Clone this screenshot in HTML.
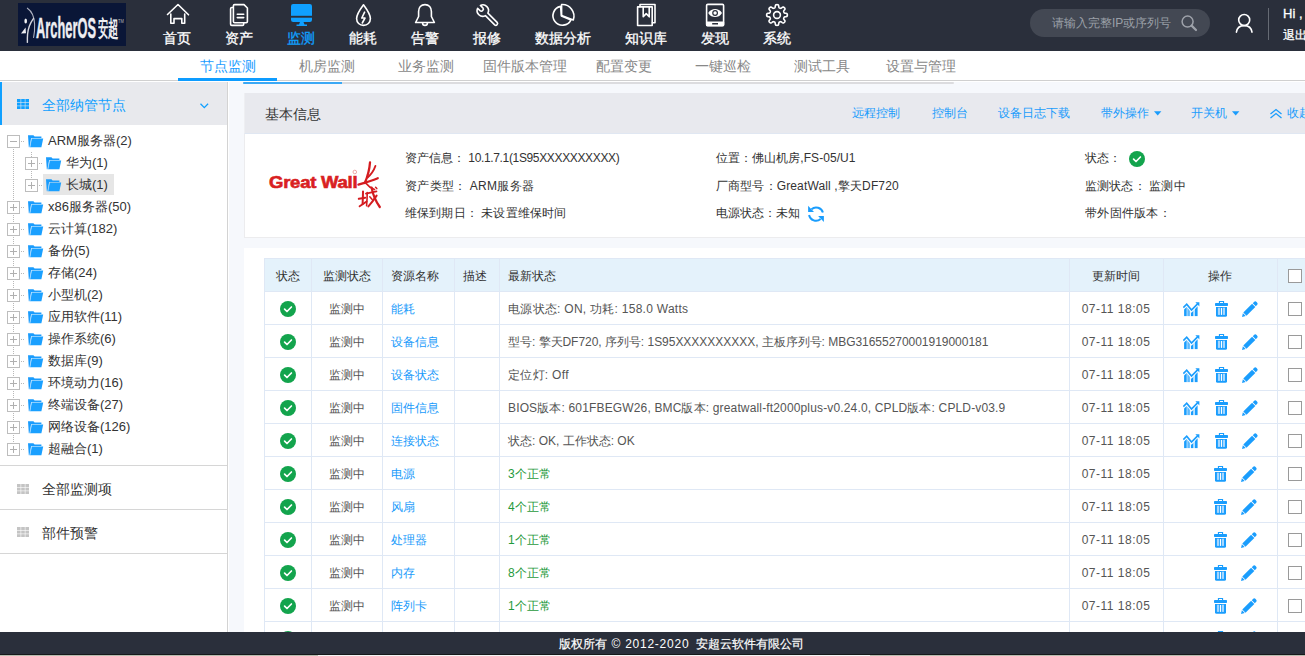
<!DOCTYPE html><html><head><meta charset="utf-8"><style>
*{margin:0;padding:0;box-sizing:border-box}
html,body{width:1305px;height:656px;overflow:hidden;background:#fff}
body{position:relative;font-family:"Liberation Sans",sans-serif;color:#333;font-size:12px}
.a{position:absolute;white-space:nowrap}
#hdr{left:0;top:0;width:1305px;height:51px;background:#2a2f3b}
#logo{left:18px;top:3px;width:108px;height:43px;background:#0a1637;overflow:hidden}
.nt{font-size:14px;line-height:16px;color:#fff;text-align:center;-webkit-text-stroke:0.3px currentColor}
.nt.on{color:#10a0ff}
#srch{left:1030px;top:9px;width:180px;height:28px;border-radius:14px;background:#434853}
.tab{top:56.5px;width:99px;text-align:center;font-size:14px;line-height:18px;color:#888}
.tab.on{color:#1a9cff}
.tr{font-size:13px;line-height:16px;color:#333}
.bx{width:13px;height:13px;border:1px solid #bdbdbd;background:#fff}
.td{font-size:12px;line-height:16px;color:#555}
.lk{color:#1a9bfb}
.gr{color:#1f9a3c}
.chk{width:14px;height:14px;border:1px solid #9a9a9a;background:#fff}
</style></head><body>
<div id="hdr" class="a"></div>
<div id="logo" class="a">
<svg class="a" style="left:0;top:0" width="108" height="43" viewBox="0 0 108 43">
<path d="M9.4 5.2 C13.5 8 16.2 13 16.6 21 C16.9 27 16.3 31 15.6 34.5" stroke="#aeb2c0" stroke-width="1.1" fill="none" stroke-linecap="round"/>
<path d="M15.4 15.6 C12.5 19.5 10.2 25 9.6 31 C9.3 34.5 9.3 37 9.4 39.4" stroke="#d6d7de" stroke-width="1.4" fill="none" stroke-linecap="round"/>
<ellipse cx="7.7" cy="18" rx="1.3" ry="2.5" fill="#f2f2f5"/>
<path d="M3 30.6 L7.6 24.6 L8 30.2 Z" fill="#eeeef2"/>
</svg>
<div class="a" style="left:18.2px;top:11.3px;font-size:29px;line-height:29px;font-weight:bold;color:#eeeef2;transform:scaleX(0.443);transform-origin:0 0;-webkit-text-stroke:0.4px #eeeef2">ArcherOS</div>
<div class="a" style="left:79.5px;top:14px;font-size:21.5px;line-height:24px;font-weight:bold;color:#eeeef2;transform:scaleX(0.47);transform-origin:0 0">安超</div>
<div class="a" style="left:100px;top:15.5px;font-size:5px;line-height:5px;color:#bbb;transform:scaleX(0.8);transform-origin:0 0">TM</div>
</div>
<div class="a nt" style="left:132px;top:29.5px;width:90px">首页</div>
<div class="a nt" style="left:194px;top:29.5px;width:90px">资产</div>
<div class="a nt on" style="left:256px;top:29.5px;width:90px">监测</div>
<div class="a nt" style="left:318px;top:29.5px;width:90px">能耗</div>
<div class="a nt" style="left:380px;top:29.5px;width:90px">告警</div>
<div class="a nt" style="left:442px;top:29.5px;width:90px">报修</div>
<div class="a nt" style="left:518px;top:29.5px;width:90px">数据分析</div>
<div class="a nt" style="left:601px;top:29.5px;width:90px">知识库</div>
<div class="a nt" style="left:670px;top:29.5px;width:90px">发现</div>
<div class="a nt" style="left:732px;top:29.5px;width:90px">系统</div>

<svg class="a" style="left:0;top:0" width="800" height="30" viewBox="0 0 800 30">
<!-- home -->
<path d="M167.5 14.5 L178 4.5 L188.5 14.8 M170.8 14 V23.3 H174 V18.6 H181.8 V23.3 H184.7 V14" stroke="#fff" stroke-width="1.6" fill="none" stroke-linejoin="round" stroke-linecap="round"/>
<!-- assets -->
<path d="M233 7.5 H231.8 Q230.6 7.5 230.6 8.7 V24.2 Q230.6 25.4 231.8 25.4 H242.5 Q243.7 25.4 243.7 24.2 V23" stroke="#fff" stroke-width="1.6" fill="none" stroke-linejoin="round" stroke-linecap="round"/>
<path d="M234.6 4.6 H244 L247.4 8 V21.6 Q247.4 22.8 246.2 22.8 H234.6 Q233.4 22.8 233.4 21.6 V5.8 Q233.4 4.6 234.6 4.6 Z" stroke="#fff" stroke-width="1.6" fill="none" stroke-linejoin="round" stroke-linecap="round"/>
<path d="M237.3 14.2 H243.7 M237.3 17.6 H243.7" stroke="#fff" stroke-width="1.6" fill="none" stroke-linejoin="round" stroke-linecap="round"/>
<!-- monitor -->
<rect x="291" y="4" width="21" height="18" rx="2.2" fill="#10a0ff"/>
<rect x="291" y="15.8" width="21" height="1.9" fill="#2a2f3b"/>
<path d="M300 22 H303.5 L304.5 24.6 H307 V26 H296.5 V24.6 H299 Z" fill="#10a0ff"/>
<!-- drop -->
<path d="M363.5 4.8 C360 9.5 356.6 14 356.6 18.6 C356.6 22.6 359.6 25.4 363.5 25.4 C367.4 25.4 370.4 22.6 370.4 18.6 C370.4 14 367 9.5 363.5 4.8 Z" stroke="#fff" stroke-width="1.6" fill="none" stroke-linejoin="round" stroke-linecap="round"/>
<path d="M364.6 12.2 L361.8 18 H365 L362.3 23" stroke="#fff" stroke-width="1.6" fill="none" stroke-linejoin="round" stroke-linecap="round"/>
<!-- bell -->
<path d="M425 4.6 C421 4.6 418.6 7.5 418.6 11.5 V16.5 L415.6 22.5 H434.4 L431.4 16.5 V11.5 C431.4 7.5 429 4.6 425 4.6 Z" stroke="#fff" stroke-width="1.6" fill="none" stroke-linejoin="round" stroke-linecap="round"/>
<path d="M422.6 23 A2.4 2.4 0 0 0 427.4 23" stroke="#fff" stroke-width="1.6" fill="none" stroke-linejoin="round" stroke-linecap="round"/>
<!-- wrench -->
<path d="M485.42 15.66 L494.67 24.84 A1.75 1.75 0 0 0 497.13 22.36 L487.88 13.18 A5.7 5.7 0 0 0 480.42 5.42 L482.83 7.82 A2.0 2.0 0 0 1 480.02 10.65 L477.60 8.26 A5.7 5.7 0 0 0 485.42 15.66 Z" stroke="#fff" stroke-width="1.6" fill="none" stroke-linejoin="round" stroke-linecap="round"/>
<!-- pie -->
<path d="M560.6 6.4 A9.5 9.5 0 1 0 571.0 19.9 L561.4 15.9 Z" stroke="#fff" stroke-width="1.6" fill="none" stroke-linejoin="round" stroke-linecap="round"/>
<path d="M561.6 4.6 V15.4 L573.3 20 A11.6 11.6 0 0 0 561.6 4.6 Z" stroke="#fff" stroke-width="1.6" fill="none" stroke-linejoin="round" stroke-linecap="round"/>
<!-- book -->
<path d="M640 6.6 V4.5 H655 V22.8 H652.4" stroke="#fff" stroke-width="1.6" fill="none" stroke-linejoin="round" stroke-linecap="round"/>
<rect x="637.6" y="6.9" width="14.6" height="18.6" stroke="#fff" stroke-width="1.6" fill="none" stroke-linejoin="round" stroke-linecap="round"/>
<path d="M643.2 7.2 V16.8 L646.2 13.6 L649.2 16.8 V7.2" stroke="#fff" stroke-width="1.6" fill="none" stroke-linejoin="round" stroke-linecap="round"/>
<!-- tablet -->
<rect x="706.6" y="4.4" width="17" height="21.2" rx="1.2" stroke="#fff" stroke-width="1.6" fill="none" stroke-linejoin="round" stroke-linecap="round"/>
<rect x="706" y="21.4" width="18.2" height="4.8" rx="1" fill="#fff"/>
<rect x="712.2" y="23" width="5.8" height="1.5" fill="#2a2f3b"/>
<path d="M708.2 13 C710 10 712.5 9 715.1 9 C717.7 9 720.2 10 722 13 C720.2 16 717.7 17 715.1 17 C712.5 17 710 16 708.2 13 Z" fill="#fff"/>
<circle cx="715.1" cy="13" r="2.9" fill="#2a2f3b"/>
<circle cx="715.1" cy="13" r="1.7" fill="#fff"/>
<!-- gear -->
<path d="M787.35 15.00 L787.34 15.27 L787.32 15.54 L787.27 15.81 L787.18 16.07 L787.00 16.32 L786.66 16.53 L786.08 16.68 L785.38 16.78 L784.80 16.87 L784.45 17.00 L784.25 17.15 L784.13 17.32 L784.04 17.49 L783.96 17.67 L783.88 17.85 L783.81 18.03 L783.74 18.21 L783.68 18.40 L783.65 18.61 L783.68 18.86 L783.84 19.19 L784.18 19.66 L784.61 20.23 L784.91 20.75 L785.00 21.14 L784.96 21.44 L784.84 21.69 L784.68 21.91 L784.51 22.12 L784.32 22.32 L784.12 22.51 L783.91 22.68 L783.69 22.84 L783.44 22.96 L783.14 23.00 L782.75 22.91 L782.23 22.61 L781.66 22.18 L781.19 21.84 L780.86 21.68 L780.61 21.65 L780.40 21.68 L780.21 21.74 L780.03 21.81 L779.85 21.88 L779.67 21.96 L779.49 22.04 L779.32 22.13 L779.15 22.25 L779.00 22.45 L778.87 22.80 L778.78 23.38 L778.68 24.08 L778.53 24.66 L778.32 25.00 L778.07 25.18 L777.81 25.27 L777.54 25.32 L777.27 25.34 L777.00 25.35 L776.73 25.34 L776.46 25.32 L776.19 25.27 L775.93 25.18 L775.68 25.00 L775.47 24.66 L775.32 24.08 L775.22 23.38 L775.13 22.80 L775.00 22.45 L774.85 22.25 L774.68 22.13 L774.51 22.04 L774.33 21.96 L774.15 21.88 L773.97 21.81 L773.79 21.74 L773.60 21.68 L773.39 21.65 L773.14 21.68 L772.81 21.84 L772.34 22.18 L771.77 22.61 L771.25 22.91 L770.86 23.00 L770.56 22.96 L770.31 22.84 L770.09 22.68 L769.88 22.51 L769.68 22.32 L769.49 22.12 L769.32 21.91 L769.16 21.69 L769.04 21.44 L769.00 21.14 L769.09 20.75 L769.39 20.23 L769.82 19.66 L770.16 19.19 L770.32 18.86 L770.35 18.61 L770.32 18.40 L770.26 18.21 L770.19 18.03 L770.12 17.85 L770.04 17.67 L769.96 17.49 L769.87 17.32 L769.75 17.15 L769.55 17.00 L769.20 16.87 L768.62 16.78 L767.92 16.68 L767.34 16.53 L767.00 16.32 L766.82 16.07 L766.73 15.81 L766.68 15.54 L766.66 15.27 L766.65 15.00 L766.66 14.73 L766.68 14.46 L766.73 14.19 L766.82 13.93 L767.00 13.68 L767.34 13.47 L767.92 13.32 L768.62 13.22 L769.20 13.13 L769.55 13.00 L769.75 12.85 L769.87 12.68 L769.96 12.51 L770.04 12.33 L770.12 12.15 L770.19 11.97 L770.26 11.79 L770.32 11.60 L770.35 11.39 L770.32 11.14 L770.16 10.81 L769.82 10.34 L769.39 9.77 L769.09 9.25 L769.00 8.86 L769.04 8.56 L769.16 8.31 L769.32 8.09 L769.49 7.88 L769.68 7.68 L769.88 7.49 L770.09 7.32 L770.31 7.16 L770.56 7.04 L770.86 7.00 L771.25 7.09 L771.77 7.39 L772.34 7.82 L772.81 8.16 L773.14 8.32 L773.39 8.35 L773.60 8.32 L773.79 8.26 L773.97 8.19 L774.15 8.12 L774.33 8.04 L774.51 7.96 L774.68 7.87 L774.85 7.75 L775.00 7.55 L775.13 7.20 L775.22 6.62 L775.32 5.92 L775.47 5.34 L775.68 5.00 L775.93 4.82 L776.19 4.73 L776.46 4.68 L776.73 4.66 L777.00 4.65 L777.27 4.66 L777.54 4.68 L777.81 4.73 L778.07 4.82 L778.32 5.00 L778.53 5.34 L778.68 5.92 L778.78 6.62 L778.87 7.20 L779.00 7.55 L779.15 7.75 L779.32 7.87 L779.49 7.96 L779.67 8.04 L779.85 8.12 L780.03 8.19 L780.21 8.26 L780.40 8.32 L780.61 8.35 L780.86 8.32 L781.19 8.16 L781.66 7.82 L782.23 7.39 L782.75 7.09 L783.14 7.00 L783.44 7.04 L783.69 7.16 L783.91 7.32 L784.12 7.49 L784.32 7.68 L784.51 7.88 L784.68 8.09 L784.84 8.31 L784.96 8.56 L785.00 8.86 L784.91 9.25 L784.61 9.77 L784.18 10.34 L783.84 10.81 L783.68 11.14 L783.65 11.39 L783.68 11.60 L783.74 11.79 L783.81 11.97 L783.88 12.15 L783.96 12.33 L784.04 12.51 L784.13 12.68 L784.25 12.85 L784.45 13.00 L784.80 13.13 L785.38 13.22 L786.08 13.32 L786.66 13.47 L787.00 13.68 L787.18 13.93 L787.27 14.19 L787.32 14.46 L787.34 14.73 Z" stroke="#fff" stroke-width="1.6" fill="none" stroke-linejoin="round" stroke-linecap="round"/>
<circle cx="777" cy="15" r="3.4" stroke="#fff" stroke-width="1.6" fill="none" stroke-linejoin="round" stroke-linecap="round"/>
</svg>
<div id="srch" class="a"></div>
<div class="a" style="left:1052px;top:15px;font-size:12px;line-height:16px;color:#9ba0a8">请输入完整IP或序列号</div>
<svg class="a" style="left:1170px;top:0" width="135" height="50" viewBox="1170 0 135 50">
<circle cx="1187.6" cy="21.6" r="5.5" stroke="#9ea2aa" stroke-width="1.5" fill="none"/>
<path d="M1191.6 25.6 L1196 30" stroke="#9ea2aa" stroke-width="2.2" stroke-linecap="round"/>
<circle cx="1244.2" cy="20" r="5.5" stroke="#fff" stroke-width="1.6" fill="none"/>
<path d="M1236.4 32.2 C1237 28 1240.2 25.6 1244.2 25.6 C1248.2 25.6 1251.4 28 1252 32.2" stroke="#fff" stroke-width="1.6" fill="none" stroke-linecap="round"/>
<rect x="1268" y="8" width="1" height="32" fill="#666b74"/>
</svg>
<div class="a" style="left:1283px;top:6px;font-size:13px;line-height:16px;color:#fff;-webkit-text-stroke:0.3px #fff">Hi ,</div>
<div class="a" style="left:1283px;top:26.5px;font-size:12px;line-height:16px;color:#fff;-webkit-text-stroke:0.3px #fff">退出</div>
<div class="a" style="left:0;top:51px;width:1305px;height:29px;background:#fff"></div>
<div class="a" style="left:0;top:80px;width:1305px;height:1px;background:#d0d0d0"></div>
<div class="a" style="left:0;top:81px;width:1305px;height:1px;background:#fff"></div>
<div class="a tab on" style="left:178px">节点监测</div>
<div class="a tab" style="left:277px">机房监测</div>
<div class="a tab" style="left:376px">业务监测</div>
<div class="a tab" style="left:475px">固件版本管理</div>
<div class="a tab" style="left:574px">配置变更</div>
<div class="a tab" style="left:673px">一键巡检</div>
<div class="a tab" style="left:772px">测试工具</div>
<div class="a tab" style="left:871px">设置与管理</div>
<div class="a" style="left:178px;top:78px;width:99px;height:3px;background:#0d9cff"></div>
<div class="a" style="left:228px;top:82px;width:1077px;height:550px;background:#f6f8fc"></div>
<div class="a" style="left:228px;top:82px;width:1px;height:550px;background:#fff"></div>
<div class="a" style="left:243px;top:82px;width:711px;height:2px;background:#dcdcdf;border-radius:0 2px 2px 0"></div>
<div class="a" style="left:243px;top:82px;width:99px;height:2px;background:#3aa8f5;border-radius:2px 0 0 2px"></div>
<div class="a" style="left:0;top:82px;width:227px;height:550px;background:#fff"></div>
<div class="a" style="left:227px;top:82px;width:1px;height:550px;background:#d3d3d3"></div>
<div class="a" style="left:0;top:82px;width:227px;height:43px;background:#e8e9ed"></div>
<div class="a" style="left:0;top:82px;width:2px;height:43px;background:#10a0ff"></div>
<svg class="a" style="left:17px;top:99px" width="12" height="10" viewBox="0 0 12 10"><rect x="0.0" y="0.0" width="3.6" height="3" fill="#10a0ff"/><rect x="4.2" y="0.0" width="3.6" height="3" fill="#10a0ff"/><rect x="8.4" y="0.0" width="3.6" height="3" fill="#10a0ff"/><rect x="0.0" y="3.6" width="3.6" height="3" fill="#10a0ff"/><rect x="4.2" y="3.6" width="3.6" height="3" fill="#10a0ff"/><rect x="8.4" y="3.6" width="3.6" height="3" fill="#10a0ff"/><rect x="0.0" y="7.2" width="3.6" height="3" fill="#10a0ff"/><rect x="4.2" y="7.2" width="3.6" height="3" fill="#10a0ff"/><rect x="8.4" y="7.2" width="3.6" height="3" fill="#10a0ff"/></svg>
<div class="a" style="left:41.5px;top:96px;font-size:14px;line-height:18px;color:#10a0ff">全部纳管节点</div>
<svg class="a" style="left:199px;top:102px" width="11" height="8" viewBox="0 0 11 8"><path d="M1.5 1.8 L5.3 5.6 L9.1 1.8" stroke="#10a0ff" stroke-width="1.3" fill="none"/></svg>
<div class="a" style="left:43px;top:174px;width:71px;height:21px;background:#e6e6e6"></div>
<svg class="a" style="left:0;top:0" width="60" height="470" viewBox="0 0 60 470"><rect x="13" y="149" width="1" height="1" fill="#b8b8b8"/><rect x="13" y="151" width="1" height="1" fill="#b8b8b8"/><rect x="13" y="153" width="1" height="1" fill="#b8b8b8"/><rect x="13" y="155" width="1" height="1" fill="#b8b8b8"/><rect x="13" y="157" width="1" height="1" fill="#b8b8b8"/><rect x="13" y="159" width="1" height="1" fill="#b8b8b8"/><rect x="13" y="161" width="1" height="1" fill="#b8b8b8"/><rect x="13" y="163" width="1" height="1" fill="#b8b8b8"/><rect x="13" y="165" width="1" height="1" fill="#b8b8b8"/><rect x="13" y="167" width="1" height="1" fill="#b8b8b8"/><rect x="13" y="169" width="1" height="1" fill="#b8b8b8"/><rect x="13" y="171" width="1" height="1" fill="#b8b8b8"/><rect x="13" y="173" width="1" height="1" fill="#b8b8b8"/><rect x="13" y="175" width="1" height="1" fill="#b8b8b8"/><rect x="13" y="177" width="1" height="1" fill="#b8b8b8"/><rect x="13" y="179" width="1" height="1" fill="#b8b8b8"/><rect x="13" y="181" width="1" height="1" fill="#b8b8b8"/><rect x="13" y="183" width="1" height="1" fill="#b8b8b8"/><rect x="13" y="185" width="1" height="1" fill="#b8b8b8"/><rect x="13" y="187" width="1" height="1" fill="#b8b8b8"/><rect x="13" y="189" width="1" height="1" fill="#b8b8b8"/><rect x="13" y="191" width="1" height="1" fill="#b8b8b8"/><rect x="13" y="193" width="1" height="1" fill="#b8b8b8"/><rect x="13" y="195" width="1" height="1" fill="#b8b8b8"/><rect x="13" y="197" width="1" height="1" fill="#b8b8b8"/><rect x="13" y="199" width="1" height="1" fill="#b8b8b8"/><rect x="13" y="201" width="1" height="1" fill="#b8b8b8"/><rect x="13" y="203" width="1" height="1" fill="#b8b8b8"/><rect x="13" y="205" width="1" height="1" fill="#b8b8b8"/><rect x="13" y="207" width="1" height="1" fill="#b8b8b8"/><rect x="13" y="209" width="1" height="1" fill="#b8b8b8"/><rect x="13" y="211" width="1" height="1" fill="#b8b8b8"/><rect x="13" y="213" width="1" height="1" fill="#b8b8b8"/><rect x="13" y="215" width="1" height="1" fill="#b8b8b8"/><rect x="13" y="217" width="1" height="1" fill="#b8b8b8"/><rect x="13" y="219" width="1" height="1" fill="#b8b8b8"/><rect x="13" y="221" width="1" height="1" fill="#b8b8b8"/><rect x="13" y="223" width="1" height="1" fill="#b8b8b8"/><rect x="13" y="225" width="1" height="1" fill="#b8b8b8"/><rect x="13" y="227" width="1" height="1" fill="#b8b8b8"/><rect x="13" y="229" width="1" height="1" fill="#b8b8b8"/><rect x="13" y="231" width="1" height="1" fill="#b8b8b8"/><rect x="13" y="233" width="1" height="1" fill="#b8b8b8"/><rect x="13" y="235" width="1" height="1" fill="#b8b8b8"/><rect x="13" y="237" width="1" height="1" fill="#b8b8b8"/><rect x="13" y="239" width="1" height="1" fill="#b8b8b8"/><rect x="13" y="241" width="1" height="1" fill="#b8b8b8"/><rect x="13" y="243" width="1" height="1" fill="#b8b8b8"/><rect x="13" y="245" width="1" height="1" fill="#b8b8b8"/><rect x="13" y="247" width="1" height="1" fill="#b8b8b8"/><rect x="13" y="249" width="1" height="1" fill="#b8b8b8"/><rect x="13" y="251" width="1" height="1" fill="#b8b8b8"/><rect x="13" y="253" width="1" height="1" fill="#b8b8b8"/><rect x="13" y="255" width="1" height="1" fill="#b8b8b8"/><rect x="13" y="257" width="1" height="1" fill="#b8b8b8"/><rect x="13" y="259" width="1" height="1" fill="#b8b8b8"/><rect x="13" y="261" width="1" height="1" fill="#b8b8b8"/><rect x="13" y="263" width="1" height="1" fill="#b8b8b8"/><rect x="13" y="265" width="1" height="1" fill="#b8b8b8"/><rect x="13" y="267" width="1" height="1" fill="#b8b8b8"/><rect x="13" y="269" width="1" height="1" fill="#b8b8b8"/><rect x="13" y="271" width="1" height="1" fill="#b8b8b8"/><rect x="13" y="273" width="1" height="1" fill="#b8b8b8"/><rect x="13" y="275" width="1" height="1" fill="#b8b8b8"/><rect x="13" y="277" width="1" height="1" fill="#b8b8b8"/><rect x="13" y="279" width="1" height="1" fill="#b8b8b8"/><rect x="13" y="281" width="1" height="1" fill="#b8b8b8"/><rect x="13" y="283" width="1" height="1" fill="#b8b8b8"/><rect x="13" y="285" width="1" height="1" fill="#b8b8b8"/><rect x="13" y="287" width="1" height="1" fill="#b8b8b8"/><rect x="13" y="289" width="1" height="1" fill="#b8b8b8"/><rect x="13" y="291" width="1" height="1" fill="#b8b8b8"/><rect x="13" y="293" width="1" height="1" fill="#b8b8b8"/><rect x="13" y="295" width="1" height="1" fill="#b8b8b8"/><rect x="13" y="297" width="1" height="1" fill="#b8b8b8"/><rect x="13" y="299" width="1" height="1" fill="#b8b8b8"/><rect x="13" y="301" width="1" height="1" fill="#b8b8b8"/><rect x="13" y="303" width="1" height="1" fill="#b8b8b8"/><rect x="13" y="305" width="1" height="1" fill="#b8b8b8"/><rect x="13" y="307" width="1" height="1" fill="#b8b8b8"/><rect x="13" y="309" width="1" height="1" fill="#b8b8b8"/><rect x="13" y="311" width="1" height="1" fill="#b8b8b8"/><rect x="13" y="313" width="1" height="1" fill="#b8b8b8"/><rect x="13" y="315" width="1" height="1" fill="#b8b8b8"/><rect x="13" y="317" width="1" height="1" fill="#b8b8b8"/><rect x="13" y="319" width="1" height="1" fill="#b8b8b8"/><rect x="13" y="321" width="1" height="1" fill="#b8b8b8"/><rect x="13" y="323" width="1" height="1" fill="#b8b8b8"/><rect x="13" y="325" width="1" height="1" fill="#b8b8b8"/><rect x="13" y="327" width="1" height="1" fill="#b8b8b8"/><rect x="13" y="329" width="1" height="1" fill="#b8b8b8"/><rect x="13" y="331" width="1" height="1" fill="#b8b8b8"/><rect x="13" y="333" width="1" height="1" fill="#b8b8b8"/><rect x="13" y="335" width="1" height="1" fill="#b8b8b8"/><rect x="13" y="337" width="1" height="1" fill="#b8b8b8"/><rect x="13" y="339" width="1" height="1" fill="#b8b8b8"/><rect x="13" y="341" width="1" height="1" fill="#b8b8b8"/><rect x="13" y="343" width="1" height="1" fill="#b8b8b8"/><rect x="13" y="345" width="1" height="1" fill="#b8b8b8"/><rect x="13" y="347" width="1" height="1" fill="#b8b8b8"/><rect x="13" y="349" width="1" height="1" fill="#b8b8b8"/><rect x="13" y="351" width="1" height="1" fill="#b8b8b8"/><rect x="13" y="353" width="1" height="1" fill="#b8b8b8"/><rect x="13" y="355" width="1" height="1" fill="#b8b8b8"/><rect x="13" y="357" width="1" height="1" fill="#b8b8b8"/><rect x="13" y="359" width="1" height="1" fill="#b8b8b8"/><rect x="13" y="361" width="1" height="1" fill="#b8b8b8"/><rect x="13" y="363" width="1" height="1" fill="#b8b8b8"/><rect x="13" y="365" width="1" height="1" fill="#b8b8b8"/><rect x="13" y="367" width="1" height="1" fill="#b8b8b8"/><rect x="13" y="369" width="1" height="1" fill="#b8b8b8"/><rect x="13" y="371" width="1" height="1" fill="#b8b8b8"/><rect x="13" y="373" width="1" height="1" fill="#b8b8b8"/><rect x="13" y="375" width="1" height="1" fill="#b8b8b8"/><rect x="13" y="377" width="1" height="1" fill="#b8b8b8"/><rect x="13" y="379" width="1" height="1" fill="#b8b8b8"/><rect x="13" y="381" width="1" height="1" fill="#b8b8b8"/><rect x="13" y="383" width="1" height="1" fill="#b8b8b8"/><rect x="13" y="385" width="1" height="1" fill="#b8b8b8"/><rect x="13" y="387" width="1" height="1" fill="#b8b8b8"/><rect x="13" y="389" width="1" height="1" fill="#b8b8b8"/><rect x="13" y="391" width="1" height="1" fill="#b8b8b8"/><rect x="13" y="393" width="1" height="1" fill="#b8b8b8"/><rect x="13" y="395" width="1" height="1" fill="#b8b8b8"/><rect x="13" y="397" width="1" height="1" fill="#b8b8b8"/><rect x="13" y="399" width="1" height="1" fill="#b8b8b8"/><rect x="13" y="401" width="1" height="1" fill="#b8b8b8"/><rect x="13" y="403" width="1" height="1" fill="#b8b8b8"/><rect x="13" y="405" width="1" height="1" fill="#b8b8b8"/><rect x="13" y="407" width="1" height="1" fill="#b8b8b8"/><rect x="13" y="409" width="1" height="1" fill="#b8b8b8"/><rect x="13" y="411" width="1" height="1" fill="#b8b8b8"/><rect x="13" y="413" width="1" height="1" fill="#b8b8b8"/><rect x="13" y="415" width="1" height="1" fill="#b8b8b8"/><rect x="13" y="417" width="1" height="1" fill="#b8b8b8"/><rect x="13" y="419" width="1" height="1" fill="#b8b8b8"/><rect x="13" y="421" width="1" height="1" fill="#b8b8b8"/><rect x="13" y="423" width="1" height="1" fill="#b8b8b8"/><rect x="13" y="425" width="1" height="1" fill="#b8b8b8"/><rect x="13" y="427" width="1" height="1" fill="#b8b8b8"/><rect x="13" y="429" width="1" height="1" fill="#b8b8b8"/><rect x="13" y="431" width="1" height="1" fill="#b8b8b8"/><rect x="13" y="433" width="1" height="1" fill="#b8b8b8"/><rect x="13" y="435" width="1" height="1" fill="#b8b8b8"/><rect x="13" y="437" width="1" height="1" fill="#b8b8b8"/><rect x="13" y="439" width="1" height="1" fill="#b8b8b8"/><rect x="13" y="441" width="1" height="1" fill="#b8b8b8"/><rect x="13" y="443" width="1" height="1" fill="#b8b8b8"/><rect x="31" y="152" width="1" height="1" fill="#b8b8b8"/><rect x="31" y="154" width="1" height="1" fill="#b8b8b8"/><rect x="31" y="156" width="1" height="1" fill="#b8b8b8"/><rect x="31" y="171" width="1" height="1" fill="#b8b8b8"/><rect x="31" y="173" width="1" height="1" fill="#b8b8b8"/><rect x="31" y="175" width="1" height="1" fill="#b8b8b8"/><rect x="31" y="177" width="1" height="1" fill="#b8b8b8"/></svg>
<div class="a bx" style="left:7px;top:135px"></div>
<div class="a" style="left:10px;top:141px;width:7px;height:1px;background:#b0b0b0"></div>
<div class="a" style="left:21px;top:141px;width:1px;height:1px;background:#b8b8b8"></div>
<div class="a" style="left:23px;top:141px;width:1px;height:1px;background:#b8b8b8"></div>
<svg class="a" style="left:28px;top:135px" width="16" height="13" viewBox="0 0 16 13">
<path d="M0 0.2 H5.4 L6.6 1.4 H13.4 V3 H3.2 L1.6 12.2 H0.8 Z" fill="#1a9cfd"/>
<path d="M3.7 3.6 H15.2 L13.4 12.2 H2 Z" fill="#1aa0ff"/>
<path d="M3.5 3.4 L1.9 12" stroke="#9fd6ff" stroke-width="0.7"/>
</svg>
<div class="a tr" style="left:48px;top:133px">ARM服务器(2)</div>
<div class="a bx" style="left:25px;top:157px"></div>
<div class="a" style="left:28px;top:163px;width:7px;height:1px;background:#b0b0b0"></div>
<div class="a" style="left:31px;top:160px;width:1px;height:7px;background:#b0b0b0"></div>
<div class="a" style="left:39px;top:163px;width:1px;height:1px;background:#b8b8b8"></div>
<div class="a" style="left:41px;top:163px;width:1px;height:1px;background:#b8b8b8"></div>
<svg class="a" style="left:46px;top:157px" width="16" height="13" viewBox="0 0 16 13">
<path d="M0 0.2 H5.4 L6.6 1.4 H13.4 V3 H3.2 L1.6 12.2 H0.8 Z" fill="#1a9cfd"/>
<path d="M3.7 3.6 H15.2 L13.4 12.2 H2 Z" fill="#1aa0ff"/>
<path d="M3.5 3.4 L1.9 12" stroke="#9fd6ff" stroke-width="0.7"/>
</svg>
<div class="a tr" style="left:66px;top:155px">华为(1)</div>
<div class="a bx" style="left:25px;top:179px"></div>
<div class="a" style="left:28px;top:185px;width:7px;height:1px;background:#b0b0b0"></div>
<div class="a" style="left:31px;top:182px;width:1px;height:7px;background:#b0b0b0"></div>
<div class="a" style="left:39px;top:185px;width:1px;height:1px;background:#b8b8b8"></div>
<div class="a" style="left:41px;top:185px;width:1px;height:1px;background:#b8b8b8"></div>
<svg class="a" style="left:46px;top:179px" width="16" height="13" viewBox="0 0 16 13">
<path d="M0 0.2 H5.4 L6.6 1.4 H13.4 V3 H3.2 L1.6 12.2 H0.8 Z" fill="#1a9cfd"/>
<path d="M3.7 3.6 H15.2 L13.4 12.2 H2 Z" fill="#1aa0ff"/>
<path d="M3.5 3.4 L1.9 12" stroke="#9fd6ff" stroke-width="0.7"/>
</svg>
<div class="a tr" style="left:66px;top:177px">长城(1)</div>
<div class="a bx" style="left:7px;top:201px"></div>
<div class="a" style="left:10px;top:207px;width:7px;height:1px;background:#b0b0b0"></div>
<div class="a" style="left:13px;top:204px;width:1px;height:7px;background:#b0b0b0"></div>
<div class="a" style="left:21px;top:207px;width:1px;height:1px;background:#b8b8b8"></div>
<div class="a" style="left:23px;top:207px;width:1px;height:1px;background:#b8b8b8"></div>
<svg class="a" style="left:28px;top:201px" width="16" height="13" viewBox="0 0 16 13">
<path d="M0 0.2 H5.4 L6.6 1.4 H13.4 V3 H3.2 L1.6 12.2 H0.8 Z" fill="#1a9cfd"/>
<path d="M3.7 3.6 H15.2 L13.4 12.2 H2 Z" fill="#1aa0ff"/>
<path d="M3.5 3.4 L1.9 12" stroke="#9fd6ff" stroke-width="0.7"/>
</svg>
<div class="a tr" style="left:48px;top:199px">x86服务器(50)</div>
<div class="a bx" style="left:7px;top:223px"></div>
<div class="a" style="left:10px;top:229px;width:7px;height:1px;background:#b0b0b0"></div>
<div class="a" style="left:13px;top:226px;width:1px;height:7px;background:#b0b0b0"></div>
<div class="a" style="left:21px;top:229px;width:1px;height:1px;background:#b8b8b8"></div>
<div class="a" style="left:23px;top:229px;width:1px;height:1px;background:#b8b8b8"></div>
<svg class="a" style="left:28px;top:223px" width="16" height="13" viewBox="0 0 16 13">
<path d="M0 0.2 H5.4 L6.6 1.4 H13.4 V3 H3.2 L1.6 12.2 H0.8 Z" fill="#1a9cfd"/>
<path d="M3.7 3.6 H15.2 L13.4 12.2 H2 Z" fill="#1aa0ff"/>
<path d="M3.5 3.4 L1.9 12" stroke="#9fd6ff" stroke-width="0.7"/>
</svg>
<div class="a tr" style="left:48px;top:221px">云计算(182)</div>
<div class="a bx" style="left:7px;top:245px"></div>
<div class="a" style="left:10px;top:251px;width:7px;height:1px;background:#b0b0b0"></div>
<div class="a" style="left:13px;top:248px;width:1px;height:7px;background:#b0b0b0"></div>
<div class="a" style="left:21px;top:251px;width:1px;height:1px;background:#b8b8b8"></div>
<div class="a" style="left:23px;top:251px;width:1px;height:1px;background:#b8b8b8"></div>
<svg class="a" style="left:28px;top:245px" width="16" height="13" viewBox="0 0 16 13">
<path d="M0 0.2 H5.4 L6.6 1.4 H13.4 V3 H3.2 L1.6 12.2 H0.8 Z" fill="#1a9cfd"/>
<path d="M3.7 3.6 H15.2 L13.4 12.2 H2 Z" fill="#1aa0ff"/>
<path d="M3.5 3.4 L1.9 12" stroke="#9fd6ff" stroke-width="0.7"/>
</svg>
<div class="a tr" style="left:48px;top:243px">备份(5)</div>
<div class="a bx" style="left:7px;top:267px"></div>
<div class="a" style="left:10px;top:273px;width:7px;height:1px;background:#b0b0b0"></div>
<div class="a" style="left:13px;top:270px;width:1px;height:7px;background:#b0b0b0"></div>
<div class="a" style="left:21px;top:273px;width:1px;height:1px;background:#b8b8b8"></div>
<div class="a" style="left:23px;top:273px;width:1px;height:1px;background:#b8b8b8"></div>
<svg class="a" style="left:28px;top:267px" width="16" height="13" viewBox="0 0 16 13">
<path d="M0 0.2 H5.4 L6.6 1.4 H13.4 V3 H3.2 L1.6 12.2 H0.8 Z" fill="#1a9cfd"/>
<path d="M3.7 3.6 H15.2 L13.4 12.2 H2 Z" fill="#1aa0ff"/>
<path d="M3.5 3.4 L1.9 12" stroke="#9fd6ff" stroke-width="0.7"/>
</svg>
<div class="a tr" style="left:48px;top:265px">存储(24)</div>
<div class="a bx" style="left:7px;top:289px"></div>
<div class="a" style="left:10px;top:295px;width:7px;height:1px;background:#b0b0b0"></div>
<div class="a" style="left:13px;top:292px;width:1px;height:7px;background:#b0b0b0"></div>
<div class="a" style="left:21px;top:295px;width:1px;height:1px;background:#b8b8b8"></div>
<div class="a" style="left:23px;top:295px;width:1px;height:1px;background:#b8b8b8"></div>
<svg class="a" style="left:28px;top:289px" width="16" height="13" viewBox="0 0 16 13">
<path d="M0 0.2 H5.4 L6.6 1.4 H13.4 V3 H3.2 L1.6 12.2 H0.8 Z" fill="#1a9cfd"/>
<path d="M3.7 3.6 H15.2 L13.4 12.2 H2 Z" fill="#1aa0ff"/>
<path d="M3.5 3.4 L1.9 12" stroke="#9fd6ff" stroke-width="0.7"/>
</svg>
<div class="a tr" style="left:48px;top:287px">小型机(2)</div>
<div class="a bx" style="left:7px;top:311px"></div>
<div class="a" style="left:10px;top:317px;width:7px;height:1px;background:#b0b0b0"></div>
<div class="a" style="left:13px;top:314px;width:1px;height:7px;background:#b0b0b0"></div>
<div class="a" style="left:21px;top:317px;width:1px;height:1px;background:#b8b8b8"></div>
<div class="a" style="left:23px;top:317px;width:1px;height:1px;background:#b8b8b8"></div>
<svg class="a" style="left:28px;top:311px" width="16" height="13" viewBox="0 0 16 13">
<path d="M0 0.2 H5.4 L6.6 1.4 H13.4 V3 H3.2 L1.6 12.2 H0.8 Z" fill="#1a9cfd"/>
<path d="M3.7 3.6 H15.2 L13.4 12.2 H2 Z" fill="#1aa0ff"/>
<path d="M3.5 3.4 L1.9 12" stroke="#9fd6ff" stroke-width="0.7"/>
</svg>
<div class="a tr" style="left:48px;top:309px">应用软件(11)</div>
<div class="a bx" style="left:7px;top:333px"></div>
<div class="a" style="left:10px;top:339px;width:7px;height:1px;background:#b0b0b0"></div>
<div class="a" style="left:13px;top:336px;width:1px;height:7px;background:#b0b0b0"></div>
<div class="a" style="left:21px;top:339px;width:1px;height:1px;background:#b8b8b8"></div>
<div class="a" style="left:23px;top:339px;width:1px;height:1px;background:#b8b8b8"></div>
<svg class="a" style="left:28px;top:333px" width="16" height="13" viewBox="0 0 16 13">
<path d="M0 0.2 H5.4 L6.6 1.4 H13.4 V3 H3.2 L1.6 12.2 H0.8 Z" fill="#1a9cfd"/>
<path d="M3.7 3.6 H15.2 L13.4 12.2 H2 Z" fill="#1aa0ff"/>
<path d="M3.5 3.4 L1.9 12" stroke="#9fd6ff" stroke-width="0.7"/>
</svg>
<div class="a tr" style="left:48px;top:331px">操作系统(6)</div>
<div class="a bx" style="left:7px;top:355px"></div>
<div class="a" style="left:10px;top:361px;width:7px;height:1px;background:#b0b0b0"></div>
<div class="a" style="left:13px;top:358px;width:1px;height:7px;background:#b0b0b0"></div>
<div class="a" style="left:21px;top:361px;width:1px;height:1px;background:#b8b8b8"></div>
<div class="a" style="left:23px;top:361px;width:1px;height:1px;background:#b8b8b8"></div>
<svg class="a" style="left:28px;top:355px" width="16" height="13" viewBox="0 0 16 13">
<path d="M0 0.2 H5.4 L6.6 1.4 H13.4 V3 H3.2 L1.6 12.2 H0.8 Z" fill="#1a9cfd"/>
<path d="M3.7 3.6 H15.2 L13.4 12.2 H2 Z" fill="#1aa0ff"/>
<path d="M3.5 3.4 L1.9 12" stroke="#9fd6ff" stroke-width="0.7"/>
</svg>
<div class="a tr" style="left:48px;top:353px">数据库(9)</div>
<div class="a bx" style="left:7px;top:377px"></div>
<div class="a" style="left:10px;top:383px;width:7px;height:1px;background:#b0b0b0"></div>
<div class="a" style="left:13px;top:380px;width:1px;height:7px;background:#b0b0b0"></div>
<div class="a" style="left:21px;top:383px;width:1px;height:1px;background:#b8b8b8"></div>
<div class="a" style="left:23px;top:383px;width:1px;height:1px;background:#b8b8b8"></div>
<svg class="a" style="left:28px;top:377px" width="16" height="13" viewBox="0 0 16 13">
<path d="M0 0.2 H5.4 L6.6 1.4 H13.4 V3 H3.2 L1.6 12.2 H0.8 Z" fill="#1a9cfd"/>
<path d="M3.7 3.6 H15.2 L13.4 12.2 H2 Z" fill="#1aa0ff"/>
<path d="M3.5 3.4 L1.9 12" stroke="#9fd6ff" stroke-width="0.7"/>
</svg>
<div class="a tr" style="left:48px;top:375px">环境动力(16)</div>
<div class="a bx" style="left:7px;top:399px"></div>
<div class="a" style="left:10px;top:405px;width:7px;height:1px;background:#b0b0b0"></div>
<div class="a" style="left:13px;top:402px;width:1px;height:7px;background:#b0b0b0"></div>
<div class="a" style="left:21px;top:405px;width:1px;height:1px;background:#b8b8b8"></div>
<div class="a" style="left:23px;top:405px;width:1px;height:1px;background:#b8b8b8"></div>
<svg class="a" style="left:28px;top:399px" width="16" height="13" viewBox="0 0 16 13">
<path d="M0 0.2 H5.4 L6.6 1.4 H13.4 V3 H3.2 L1.6 12.2 H0.8 Z" fill="#1a9cfd"/>
<path d="M3.7 3.6 H15.2 L13.4 12.2 H2 Z" fill="#1aa0ff"/>
<path d="M3.5 3.4 L1.9 12" stroke="#9fd6ff" stroke-width="0.7"/>
</svg>
<div class="a tr" style="left:48px;top:397px">终端设备(27)</div>
<div class="a bx" style="left:7px;top:421px"></div>
<div class="a" style="left:10px;top:427px;width:7px;height:1px;background:#b0b0b0"></div>
<div class="a" style="left:13px;top:424px;width:1px;height:7px;background:#b0b0b0"></div>
<div class="a" style="left:21px;top:427px;width:1px;height:1px;background:#b8b8b8"></div>
<div class="a" style="left:23px;top:427px;width:1px;height:1px;background:#b8b8b8"></div>
<svg class="a" style="left:28px;top:421px" width="16" height="13" viewBox="0 0 16 13">
<path d="M0 0.2 H5.4 L6.6 1.4 H13.4 V3 H3.2 L1.6 12.2 H0.8 Z" fill="#1a9cfd"/>
<path d="M3.7 3.6 H15.2 L13.4 12.2 H2 Z" fill="#1aa0ff"/>
<path d="M3.5 3.4 L1.9 12" stroke="#9fd6ff" stroke-width="0.7"/>
</svg>
<div class="a tr" style="left:48px;top:419px">网络设备(126)</div>
<div class="a bx" style="left:7px;top:443px"></div>
<div class="a" style="left:10px;top:449px;width:7px;height:1px;background:#b0b0b0"></div>
<div class="a" style="left:13px;top:446px;width:1px;height:7px;background:#b0b0b0"></div>
<div class="a" style="left:21px;top:449px;width:1px;height:1px;background:#b8b8b8"></div>
<div class="a" style="left:23px;top:449px;width:1px;height:1px;background:#b8b8b8"></div>
<svg class="a" style="left:28px;top:443px" width="16" height="13" viewBox="0 0 16 13">
<path d="M0 0.2 H5.4 L6.6 1.4 H13.4 V3 H3.2 L1.6 12.2 H0.8 Z" fill="#1a9cfd"/>
<path d="M3.7 3.6 H15.2 L13.4 12.2 H2 Z" fill="#1aa0ff"/>
<path d="M3.5 3.4 L1.9 12" stroke="#9fd6ff" stroke-width="0.7"/>
</svg>
<div class="a tr" style="left:48px;top:441px">超融合(1)</div>
<div class="a" style="left:0;top:465px;width:227px;height:1px;background:#d6d6d6"></div>
<div class="a" style="left:0;top:509px;width:227px;height:1px;background:#d6d6d6"></div>
<div class="a" style="left:0;top:553px;width:227px;height:1px;background:#d6d6d6"></div>
<svg class="a" style="left:17px;top:484px" width="12" height="10" viewBox="0 0 12 10"><rect x="0.0" y="0.0" width="3.6" height="3" fill="#c4c4c4"/><rect x="4.2" y="0.0" width="3.6" height="3" fill="#c4c4c4"/><rect x="8.4" y="0.0" width="3.6" height="3" fill="#c4c4c4"/><rect x="0.0" y="3.6" width="3.6" height="3" fill="#c4c4c4"/><rect x="4.2" y="3.6" width="3.6" height="3" fill="#c4c4c4"/><rect x="8.4" y="3.6" width="3.6" height="3" fill="#c4c4c4"/><rect x="0.0" y="7.2" width="3.6" height="3" fill="#c4c4c4"/><rect x="4.2" y="7.2" width="3.6" height="3" fill="#c4c4c4"/><rect x="8.4" y="7.2" width="3.6" height="3" fill="#c4c4c4"/></svg>
<svg class="a" style="left:17px;top:527px" width="12" height="10" viewBox="0 0 12 10"><rect x="0.0" y="0.0" width="3.6" height="3" fill="#c4c4c4"/><rect x="4.2" y="0.0" width="3.6" height="3" fill="#c4c4c4"/><rect x="8.4" y="0.0" width="3.6" height="3" fill="#c4c4c4"/><rect x="0.0" y="3.6" width="3.6" height="3" fill="#c4c4c4"/><rect x="4.2" y="3.6" width="3.6" height="3" fill="#c4c4c4"/><rect x="8.4" y="3.6" width="3.6" height="3" fill="#c4c4c4"/><rect x="0.0" y="7.2" width="3.6" height="3" fill="#c4c4c4"/><rect x="4.2" y="7.2" width="3.6" height="3" fill="#c4c4c4"/><rect x="8.4" y="7.2" width="3.6" height="3" fill="#c4c4c4"/></svg>
<div class="a" style="left:42px;top:479.5px;font-size:14px;line-height:18px;color:#333">全部监测项</div>
<div class="a" style="left:42px;top:523.5px;font-size:14px;line-height:18px;color:#333">部件预警</div>
<div class="a" style="left:244px;top:93px;width:1061px;height:41px;background:#e8e9ee;border-left:1px solid #eeeff2;border-bottom:1px solid #e0e7f2"></div>
<div class="a" style="left:244px;top:134px;width:1061px;height:104px;background:#fff;border-bottom:1px solid #ececee;border-left:1px solid #ececee"></div>
<div class="a" style="left:265px;top:105px;font-size:14px;line-height:18px;color:#333">基本信息</div>
<div class="a" style="left:852px;top:105px;font-size:12px;line-height:16px;color:#1a9cfc">远程控制</div>
<div class="a" style="left:932px;top:105px;font-size:12px;line-height:16px;color:#1a9cfc">控制台</div>
<div class="a" style="left:998px;top:105px;font-size:12px;line-height:16px;color:#1a9cfc">设备日志下载</div>
<div class="a" style="left:1101px;top:105px;font-size:12px;line-height:16px;color:#1a9cfc">带外操作</div>
<svg class="a" style="left:1154px;top:110.5px" width="8" height="5" viewBox="0 0 8 5"><path d="M0 0.3 H7.4 L3.7 4.6 Z" fill="#1a9cfc"/></svg>
<div class="a" style="left:1191px;top:105px;font-size:12px;line-height:16px;color:#1a9cfc">开关机</div>
<svg class="a" style="left:1232px;top:110.5px" width="8" height="5" viewBox="0 0 8 5"><path d="M0 0.3 H7.4 L3.7 4.6 Z" fill="#1a9cfc"/></svg>
<svg class="a" style="left:1269px;top:108px" width="14" height="11" viewBox="0 0 14 11"><path d="M1.5 6 L7 1.5 L12.5 6 M1.5 10 L7 5.5 L12.5 10" stroke="#1a9cfc" stroke-width="1.3" fill="none"/></svg>
<div class="a" style="left:1287px;top:105px;font-size:12px;line-height:16px;color:#1a9cfc">收起</div>
<div class="a" style="left:268.6px;top:174px;font-size:16px;line-height:18px;font-weight:bold;color:#d91f22;transform:scaleX(1.155);transform-origin:0 0;-webkit-text-stroke:0.6px #d91f22;letter-spacing:-0.2px">Great Wall</div>
<svg class="a" style="left:350px;top:160px" width="36" height="50" viewBox="350 160 36 50">
<g stroke="#d41c20" fill="none" stroke-linecap="round" stroke-linejoin="round">
<path d="M370 162.5 C369.6 168 367.8 176 364.8 183" stroke-width="2.3"/>
<path d="M375.4 166 C374 170 371 174.5 367.6 177.5" stroke-width="1.9"/>
<path d="M358.4 184.6 C364 183 371 181 377.8 178.2" stroke-width="2.2"/>
<path d="M366.2 183.5 C368.5 186.5 371.5 188.5 374.5 189.5" stroke-width="1.7"/>
<path d="M358.8 198.8 C361 198.5 363 198.2 365.2 197.8" stroke-width="2"/>
<path d="M363 191.5 C363 196 362.8 200 362.6 204" stroke-width="2"/>
<path d="M359.6 206.2 C362 204.8 364.2 203.4 366.6 201.6" stroke-width="1.9"/>
<path d="M367.2 192.5 C367.2 197 367 201.5 366.6 205.8" stroke-width="1.6"/>
<path d="M366 193.6 C369.5 193 373 192.2 376.4 191.4" stroke-width="1.9"/>
<path d="M371.6 187.6 C372.8 194 375.5 201 379.8 207" stroke-width="2.3"/>
<path d="M376.6 195.6 C374 199.5 371.5 203 368.4 206.4" stroke-width="2"/>
<path d="M369.8 196.8 L372.2 199.6" stroke-width="1.5"/>
<path d="M375.6 187.2 L376.8 188.6" stroke-width="1.5"/>
</g>
<circle cx="354.8" cy="172" r="1.8" stroke="#e27070" stroke-width="0.6" fill="none"/>
</svg>
<div class="a" style="left:405px;top:150px;font-size:12px;line-height:16px;color:#333">资产信息： <span style="letter-spacing:-0.35px">10.1.7.1(1S95XXXXXXXXXX)</span></div>
<div class="a" style="left:405px;top:178px;font-size:12px;line-height:16px;color:#333"><span style="letter-spacing:0.25px">资产类型： ARM服务器</span></div>
<div class="a" style="left:405px;top:205px;font-size:12px;line-height:16px;color:#333"><span style="letter-spacing:0.14px">维保到期日： 未设置维保时间</span></div>
<div class="a" style="left:716px;top:150px;font-size:12px;line-height:16px;color:#333"><span style="letter-spacing:0.05px">位置：佛山机房,FS-05/U1</span></div>
<div class="a" style="left:716px;top:178px;font-size:12px;line-height:16px;color:#333"><span style="letter-spacing:0.14px">厂商型号：GreatWall ,擎天DF720</span></div>
<div class="a" style="left:716px;top:205px;font-size:12px;line-height:16px;color:#333">电源状态：未知</div>
<div class="a" style="left:1085px;top:150px;font-size:12px;line-height:16px;color:#333">状态：</div>
<div class="a" style="left:1085px;top:178px;font-size:12px;line-height:16px;color:#333"><span style="letter-spacing:0.15px">监测状态： 监测中</span></div>
<div class="a" style="left:1085px;top:205px;font-size:12px;line-height:16px;color:#333"><span style="letter-spacing:0.28px">带外固件版本：</span></div>
<svg class="a" style="left:1129px;top:151px" width="16" height="16" viewBox="0 0 16 16"><circle cx="8" cy="8" r="8" fill="#13a44d"/><path d="M4.6 8.2 L7 10.5 L11.4 6" stroke="#fff" stroke-width="1.7" fill="none" stroke-linecap="round" stroke-linejoin="round"/></svg>
<svg class="a" style="left:806px;top:204px" width="20" height="20" viewBox="0 0 20 20">
<path d="M5.5 5.2 A7 7 0 0 1 16.9 8.6" stroke="#1a9dfd" stroke-width="2" fill="none"/>
<path d="M2.1 1.8 V8 H8 Z" fill="#1a9dfd"/>
<path d="M3.1 11 A7 7 0 0 0 14.6 15" stroke="#1a9dfd" stroke-width="2" fill="none"/>
<path d="M17.9 12.1 V18.1 L12.1 12.1 Z" fill="#1a9dfd"/>
</svg>
<div class="a" style="left:244px;top:248px;width:1061px;height:384px;background:#fff"></div>
<div class="a" style="left:264px;top:258px;width:1041px;height:34px;background:#e4f2fb"></div>
<div class="a" style="left:264px;top:258px;width:1041px;height:1px;background:#dfe8f5"></div>
<div class="a" style="left:264px;top:291px;width:1041px;height:1px;background:#dfe8f5"></div>
<div class="a" style="left:264px;top:324px;width:1041px;height:1px;background:#dfe8f5"></div>
<div class="a" style="left:264px;top:357px;width:1041px;height:1px;background:#dfe8f5"></div>
<div class="a" style="left:264px;top:390px;width:1041px;height:1px;background:#dfe8f5"></div>
<div class="a" style="left:264px;top:423px;width:1041px;height:1px;background:#dfe8f5"></div>
<div class="a" style="left:264px;top:456px;width:1041px;height:1px;background:#dfe8f5"></div>
<div class="a" style="left:264px;top:489px;width:1041px;height:1px;background:#dfe8f5"></div>
<div class="a" style="left:264px;top:522px;width:1041px;height:1px;background:#dfe8f5"></div>
<div class="a" style="left:264px;top:555px;width:1041px;height:1px;background:#dfe8f5"></div>
<div class="a" style="left:264px;top:588px;width:1041px;height:1px;background:#dfe8f5"></div>
<div class="a" style="left:264px;top:621px;width:1041px;height:1px;background:#dfe8f5"></div>
<div class="a" style="left:264px;top:654px;width:1041px;height:1px;background:#dfe8f5"></div>
<div class="a" style="left:264px;top:258px;width:1px;height:374px;background:#dfe8f5"></div>
<div class="a" style="left:311px;top:258px;width:1px;height:374px;background:#dfe8f5"></div>
<div class="a" style="left:382px;top:258px;width:1px;height:374px;background:#dfe8f5"></div>
<div class="a" style="left:454px;top:258px;width:1px;height:374px;background:#dfe8f5"></div>
<div class="a" style="left:499px;top:258px;width:1px;height:374px;background:#dfe8f5"></div>
<div class="a" style="left:1069px;top:258px;width:1px;height:374px;background:#dfe8f5"></div>
<div class="a" style="left:1163px;top:258px;width:1px;height:374px;background:#dfe8f5"></div>
<div class="a" style="left:1277px;top:258px;width:1px;height:374px;background:#dfe8f5"></div>
<div class="a td" style="left:264px;width:47px;text-align:center;top:268px;color:#333">状态</div>
<div class="a td" style="left:311px;width:71px;text-align:center;top:268px;color:#333">监测状态</div>
<div class="a td" style="left:391px;top:268px;color:#333">资源名称</div>
<div class="a td" style="left:463px;top:268px;color:#333">描述</div>
<div class="a td" style="left:508px;top:268px;color:#333">最新状态</div>
<div class="a td" style="left:1069px;width:94px;text-align:center;top:268px;color:#333">更新时间</div>
<div class="a td" style="left:1163px;width:114px;text-align:center;top:268px;color:#333">操作</div>
<div class="a chk" style="left:1288px;top:269px"></div>
<svg class="a" style="left:280px;top:301px" width="16" height="16" viewBox="0 0 16 16"><circle cx="8" cy="8" r="8" fill="#13a44d"/><path d="M4.6 8.2 L7 10.5 L11.4 6" stroke="#fff" stroke-width="1.7" fill="none" stroke-linecap="round" stroke-linejoin="round"/></svg>
<div class="a td" style="left:311px;width:71px;text-align:center;top:301px">监测中</div>
<div class="a td lk" style="left:391px;top:301px">能耗</div>
<div class="a td " style="left:508px;top:301px"><span style="letter-spacing:0.27px">电源状态: ON, 功耗: 158.0 Watts</span></div>
<div class="a td" style="left:1069px;width:94px;text-align:center;top:301px;letter-spacing:0.5px">07-11 18:05</div>
<div class="a chk" style="left:1288px;top:302px"></div>
<svg class="a" style="left:1183px;top:301.5px" width="17" height="15" viewBox="0 0 17 15">
<rect x="1.1" y="2" width="2.6" height="12.1" fill="#1a9dfd"/>
<rect x="4.3" y="2" width="2.6" height="12.1" fill="#5cb9fd"/>
<rect x="7.9" y="2" width="2.5" height="12.1" fill="#1a9dfd"/>
<rect x="11.7" y="2" width="2.9" height="12.1" fill="#1a9dfd"/>
<path d="M0 0 H17 V4.6 H14.4 L8.5 10.7 L3.7 4.9 L0 8.6 Z" fill="#fff"/>
<path d="M0.3 5.6 L3.7 2.2 L8.5 8 L14.6 1.8" stroke="#1a9dfd" stroke-width="1.7" fill="none"/>
<path d="M12.4 0.3 H16.4 V4.4 Z" fill="#1a9dfd"/>
</svg>
<svg class="a" style="left:1214px;top:301px" width="15" height="16" viewBox="0 0 15 16">
<path d="M4.9 0 H10.1 V2.2 H9 V1 H6 V2.2 H4.9 Z" fill="#1a9dfd"/>
<rect x="1" y="2" width="13" height="2.9" rx="0.7" fill="#1a9dfd"/>
<path d="M2 5.9 H13 V14.2 Q13 15.8 11.4 15.8 H3.6 Q2 15.8 2 14.2 Z" fill="#1a9dfd"/>
<rect x="3.9" y="6.7" width="2.2" height="7.2" fill="#a6d7ff"/>
<rect x="8.9" y="6.7" width="2.1" height="7.2" fill="#a6d7ff"/>
<rect x="6.9" y="7" width="1.2" height="6.9" fill="#fff"/>
</svg>
<svg class="a" style="left:1242px;top:301px" width="16" height="16" viewBox="0 0 16 16">
<path d="M12.2 0.8 Q13.4 -0.2 14.6 1 L15 1.4 Q16.2 2.6 15.2 3.8 L13.8 5.2 L10.8 2.2 Z" fill="#1a9dfd"/>
<path d="M10.1 2.7 L13.3 5.9 L4.5 14.7 L1.3 11.5 Z" fill="#1a9dfd"/>
<path d="M0.9 12.3 L3.7 15.1 L0 16 Z" fill="#1a9dfd"/>
</svg>
<svg class="a" style="left:280px;top:334px" width="16" height="16" viewBox="0 0 16 16"><circle cx="8" cy="8" r="8" fill="#13a44d"/><path d="M4.6 8.2 L7 10.5 L11.4 6" stroke="#fff" stroke-width="1.7" fill="none" stroke-linecap="round" stroke-linejoin="round"/></svg>
<div class="a td" style="left:311px;width:71px;text-align:center;top:334px">监测中</div>
<div class="a td lk" style="left:391px;top:334px">设备信息</div>
<div class="a td " style="left:508px;top:334px"><span style="letter-spacing:-0.03px">型号: 擎天DF720, 序列号: 1S95XXXXXXXXXX, 主板序列号: MBG31655270001919000181</span></div>
<div class="a td" style="left:1069px;width:94px;text-align:center;top:334px;letter-spacing:0.5px">07-11 18:05</div>
<div class="a chk" style="left:1288px;top:335px"></div>
<svg class="a" style="left:1183px;top:334.5px" width="17" height="15" viewBox="0 0 17 15">
<rect x="1.1" y="2" width="2.6" height="12.1" fill="#1a9dfd"/>
<rect x="4.3" y="2" width="2.6" height="12.1" fill="#5cb9fd"/>
<rect x="7.9" y="2" width="2.5" height="12.1" fill="#1a9dfd"/>
<rect x="11.7" y="2" width="2.9" height="12.1" fill="#1a9dfd"/>
<path d="M0 0 H17 V4.6 H14.4 L8.5 10.7 L3.7 4.9 L0 8.6 Z" fill="#fff"/>
<path d="M0.3 5.6 L3.7 2.2 L8.5 8 L14.6 1.8" stroke="#1a9dfd" stroke-width="1.7" fill="none"/>
<path d="M12.4 0.3 H16.4 V4.4 Z" fill="#1a9dfd"/>
</svg>
<svg class="a" style="left:1214px;top:334px" width="15" height="16" viewBox="0 0 15 16">
<path d="M4.9 0 H10.1 V2.2 H9 V1 H6 V2.2 H4.9 Z" fill="#1a9dfd"/>
<rect x="1" y="2" width="13" height="2.9" rx="0.7" fill="#1a9dfd"/>
<path d="M2 5.9 H13 V14.2 Q13 15.8 11.4 15.8 H3.6 Q2 15.8 2 14.2 Z" fill="#1a9dfd"/>
<rect x="3.9" y="6.7" width="2.2" height="7.2" fill="#a6d7ff"/>
<rect x="8.9" y="6.7" width="2.1" height="7.2" fill="#a6d7ff"/>
<rect x="6.9" y="7" width="1.2" height="6.9" fill="#fff"/>
</svg>
<svg class="a" style="left:1242px;top:334px" width="16" height="16" viewBox="0 0 16 16">
<path d="M12.2 0.8 Q13.4 -0.2 14.6 1 L15 1.4 Q16.2 2.6 15.2 3.8 L13.8 5.2 L10.8 2.2 Z" fill="#1a9dfd"/>
<path d="M10.1 2.7 L13.3 5.9 L4.5 14.7 L1.3 11.5 Z" fill="#1a9dfd"/>
<path d="M0.9 12.3 L3.7 15.1 L0 16 Z" fill="#1a9dfd"/>
</svg>
<svg class="a" style="left:280px;top:367px" width="16" height="16" viewBox="0 0 16 16"><circle cx="8" cy="8" r="8" fill="#13a44d"/><path d="M4.6 8.2 L7 10.5 L11.4 6" stroke="#fff" stroke-width="1.7" fill="none" stroke-linecap="round" stroke-linejoin="round"/></svg>
<div class="a td" style="left:311px;width:71px;text-align:center;top:367px">监测中</div>
<div class="a td lk" style="left:391px;top:367px">设备状态</div>
<div class="a td " style="left:508px;top:367px"><span style="letter-spacing:0.29px">定位灯: Off</span></div>
<div class="a td" style="left:1069px;width:94px;text-align:center;top:367px;letter-spacing:0.5px">07-11 18:05</div>
<div class="a chk" style="left:1288px;top:368px"></div>
<svg class="a" style="left:1183px;top:367.5px" width="17" height="15" viewBox="0 0 17 15">
<rect x="1.1" y="2" width="2.6" height="12.1" fill="#1a9dfd"/>
<rect x="4.3" y="2" width="2.6" height="12.1" fill="#5cb9fd"/>
<rect x="7.9" y="2" width="2.5" height="12.1" fill="#1a9dfd"/>
<rect x="11.7" y="2" width="2.9" height="12.1" fill="#1a9dfd"/>
<path d="M0 0 H17 V4.6 H14.4 L8.5 10.7 L3.7 4.9 L0 8.6 Z" fill="#fff"/>
<path d="M0.3 5.6 L3.7 2.2 L8.5 8 L14.6 1.8" stroke="#1a9dfd" stroke-width="1.7" fill="none"/>
<path d="M12.4 0.3 H16.4 V4.4 Z" fill="#1a9dfd"/>
</svg>
<svg class="a" style="left:1214px;top:367px" width="15" height="16" viewBox="0 0 15 16">
<path d="M4.9 0 H10.1 V2.2 H9 V1 H6 V2.2 H4.9 Z" fill="#1a9dfd"/>
<rect x="1" y="2" width="13" height="2.9" rx="0.7" fill="#1a9dfd"/>
<path d="M2 5.9 H13 V14.2 Q13 15.8 11.4 15.8 H3.6 Q2 15.8 2 14.2 Z" fill="#1a9dfd"/>
<rect x="3.9" y="6.7" width="2.2" height="7.2" fill="#a6d7ff"/>
<rect x="8.9" y="6.7" width="2.1" height="7.2" fill="#a6d7ff"/>
<rect x="6.9" y="7" width="1.2" height="6.9" fill="#fff"/>
</svg>
<svg class="a" style="left:1242px;top:367px" width="16" height="16" viewBox="0 0 16 16">
<path d="M12.2 0.8 Q13.4 -0.2 14.6 1 L15 1.4 Q16.2 2.6 15.2 3.8 L13.8 5.2 L10.8 2.2 Z" fill="#1a9dfd"/>
<path d="M10.1 2.7 L13.3 5.9 L4.5 14.7 L1.3 11.5 Z" fill="#1a9dfd"/>
<path d="M0.9 12.3 L3.7 15.1 L0 16 Z" fill="#1a9dfd"/>
</svg>
<svg class="a" style="left:280px;top:400px" width="16" height="16" viewBox="0 0 16 16"><circle cx="8" cy="8" r="8" fill="#13a44d"/><path d="M4.6 8.2 L7 10.5 L11.4 6" stroke="#fff" stroke-width="1.7" fill="none" stroke-linecap="round" stroke-linejoin="round"/></svg>
<div class="a td" style="left:311px;width:71px;text-align:center;top:400px">监测中</div>
<div class="a td lk" style="left:391px;top:400px">固件信息</div>
<div class="a td " style="left:508px;top:400px"><span style="letter-spacing:0.15px">BIOS版本: 601FBEGW26, BMC版本: greatwall-ft2000plus-v0.24.0, CPLD版本: CPLD-v03.9</span></div>
<div class="a td" style="left:1069px;width:94px;text-align:center;top:400px;letter-spacing:0.5px">07-11 18:05</div>
<div class="a chk" style="left:1288px;top:401px"></div>
<svg class="a" style="left:1183px;top:400.5px" width="17" height="15" viewBox="0 0 17 15">
<rect x="1.1" y="2" width="2.6" height="12.1" fill="#1a9dfd"/>
<rect x="4.3" y="2" width="2.6" height="12.1" fill="#5cb9fd"/>
<rect x="7.9" y="2" width="2.5" height="12.1" fill="#1a9dfd"/>
<rect x="11.7" y="2" width="2.9" height="12.1" fill="#1a9dfd"/>
<path d="M0 0 H17 V4.6 H14.4 L8.5 10.7 L3.7 4.9 L0 8.6 Z" fill="#fff"/>
<path d="M0.3 5.6 L3.7 2.2 L8.5 8 L14.6 1.8" stroke="#1a9dfd" stroke-width="1.7" fill="none"/>
<path d="M12.4 0.3 H16.4 V4.4 Z" fill="#1a9dfd"/>
</svg>
<svg class="a" style="left:1214px;top:400px" width="15" height="16" viewBox="0 0 15 16">
<path d="M4.9 0 H10.1 V2.2 H9 V1 H6 V2.2 H4.9 Z" fill="#1a9dfd"/>
<rect x="1" y="2" width="13" height="2.9" rx="0.7" fill="#1a9dfd"/>
<path d="M2 5.9 H13 V14.2 Q13 15.8 11.4 15.8 H3.6 Q2 15.8 2 14.2 Z" fill="#1a9dfd"/>
<rect x="3.9" y="6.7" width="2.2" height="7.2" fill="#a6d7ff"/>
<rect x="8.9" y="6.7" width="2.1" height="7.2" fill="#a6d7ff"/>
<rect x="6.9" y="7" width="1.2" height="6.9" fill="#fff"/>
</svg>
<svg class="a" style="left:1242px;top:400px" width="16" height="16" viewBox="0 0 16 16">
<path d="M12.2 0.8 Q13.4 -0.2 14.6 1 L15 1.4 Q16.2 2.6 15.2 3.8 L13.8 5.2 L10.8 2.2 Z" fill="#1a9dfd"/>
<path d="M10.1 2.7 L13.3 5.9 L4.5 14.7 L1.3 11.5 Z" fill="#1a9dfd"/>
<path d="M0.9 12.3 L3.7 15.1 L0 16 Z" fill="#1a9dfd"/>
</svg>
<svg class="a" style="left:280px;top:433px" width="16" height="16" viewBox="0 0 16 16"><circle cx="8" cy="8" r="8" fill="#13a44d"/><path d="M4.6 8.2 L7 10.5 L11.4 6" stroke="#fff" stroke-width="1.7" fill="none" stroke-linecap="round" stroke-linejoin="round"/></svg>
<div class="a td" style="left:311px;width:71px;text-align:center;top:433px">监测中</div>
<div class="a td lk" style="left:391px;top:433px">连接状态</div>
<div class="a td " style="left:508px;top:433px">状态: OK, 工作状态: OK</div>
<div class="a td" style="left:1069px;width:94px;text-align:center;top:433px;letter-spacing:0.5px">07-11 18:05</div>
<div class="a chk" style="left:1288px;top:434px"></div>
<svg class="a" style="left:1183px;top:433.5px" width="17" height="15" viewBox="0 0 17 15">
<rect x="1.1" y="2" width="2.6" height="12.1" fill="#1a9dfd"/>
<rect x="4.3" y="2" width="2.6" height="12.1" fill="#5cb9fd"/>
<rect x="7.9" y="2" width="2.5" height="12.1" fill="#1a9dfd"/>
<rect x="11.7" y="2" width="2.9" height="12.1" fill="#1a9dfd"/>
<path d="M0 0 H17 V4.6 H14.4 L8.5 10.7 L3.7 4.9 L0 8.6 Z" fill="#fff"/>
<path d="M0.3 5.6 L3.7 2.2 L8.5 8 L14.6 1.8" stroke="#1a9dfd" stroke-width="1.7" fill="none"/>
<path d="M12.4 0.3 H16.4 V4.4 Z" fill="#1a9dfd"/>
</svg>
<svg class="a" style="left:1214px;top:433px" width="15" height="16" viewBox="0 0 15 16">
<path d="M4.9 0 H10.1 V2.2 H9 V1 H6 V2.2 H4.9 Z" fill="#1a9dfd"/>
<rect x="1" y="2" width="13" height="2.9" rx="0.7" fill="#1a9dfd"/>
<path d="M2 5.9 H13 V14.2 Q13 15.8 11.4 15.8 H3.6 Q2 15.8 2 14.2 Z" fill="#1a9dfd"/>
<rect x="3.9" y="6.7" width="2.2" height="7.2" fill="#a6d7ff"/>
<rect x="8.9" y="6.7" width="2.1" height="7.2" fill="#a6d7ff"/>
<rect x="6.9" y="7" width="1.2" height="6.9" fill="#fff"/>
</svg>
<svg class="a" style="left:1242px;top:433px" width="16" height="16" viewBox="0 0 16 16">
<path d="M12.2 0.8 Q13.4 -0.2 14.6 1 L15 1.4 Q16.2 2.6 15.2 3.8 L13.8 5.2 L10.8 2.2 Z" fill="#1a9dfd"/>
<path d="M10.1 2.7 L13.3 5.9 L4.5 14.7 L1.3 11.5 Z" fill="#1a9dfd"/>
<path d="M0.9 12.3 L3.7 15.1 L0 16 Z" fill="#1a9dfd"/>
</svg>
<svg class="a" style="left:280px;top:466px" width="16" height="16" viewBox="0 0 16 16"><circle cx="8" cy="8" r="8" fill="#13a44d"/><path d="M4.6 8.2 L7 10.5 L11.4 6" stroke="#fff" stroke-width="1.7" fill="none" stroke-linecap="round" stroke-linejoin="round"/></svg>
<div class="a td" style="left:311px;width:71px;text-align:center;top:466px">监测中</div>
<div class="a td lk" style="left:391px;top:466px">电源</div>
<div class="a td gr" style="left:508px;top:466px">3个正常</div>
<div class="a td" style="left:1069px;width:94px;text-align:center;top:466px;letter-spacing:0.5px">07-11 18:05</div>
<div class="a chk" style="left:1288px;top:467px"></div>
<svg class="a" style="left:1213px;top:466px" width="15" height="16" viewBox="0 0 15 16">
<path d="M4.9 0 H10.1 V2.2 H9 V1 H6 V2.2 H4.9 Z" fill="#1a9dfd"/>
<rect x="1" y="2" width="13" height="2.9" rx="0.7" fill="#1a9dfd"/>
<path d="M2 5.9 H13 V14.2 Q13 15.8 11.4 15.8 H3.6 Q2 15.8 2 14.2 Z" fill="#1a9dfd"/>
<rect x="3.9" y="6.7" width="2.2" height="7.2" fill="#a6d7ff"/>
<rect x="8.9" y="6.7" width="2.1" height="7.2" fill="#a6d7ff"/>
<rect x="6.9" y="7" width="1.2" height="6.9" fill="#fff"/>
</svg>
<svg class="a" style="left:1241px;top:466px" width="16" height="16" viewBox="0 0 16 16">
<path d="M12.2 0.8 Q13.4 -0.2 14.6 1 L15 1.4 Q16.2 2.6 15.2 3.8 L13.8 5.2 L10.8 2.2 Z" fill="#1a9dfd"/>
<path d="M10.1 2.7 L13.3 5.9 L4.5 14.7 L1.3 11.5 Z" fill="#1a9dfd"/>
<path d="M0.9 12.3 L3.7 15.1 L0 16 Z" fill="#1a9dfd"/>
</svg>
<svg class="a" style="left:280px;top:499px" width="16" height="16" viewBox="0 0 16 16"><circle cx="8" cy="8" r="8" fill="#13a44d"/><path d="M4.6 8.2 L7 10.5 L11.4 6" stroke="#fff" stroke-width="1.7" fill="none" stroke-linecap="round" stroke-linejoin="round"/></svg>
<div class="a td" style="left:311px;width:71px;text-align:center;top:499px">监测中</div>
<div class="a td lk" style="left:391px;top:499px">风扇</div>
<div class="a td gr" style="left:508px;top:499px">4个正常</div>
<div class="a td" style="left:1069px;width:94px;text-align:center;top:499px;letter-spacing:0.5px">07-11 18:05</div>
<div class="a chk" style="left:1288px;top:500px"></div>
<svg class="a" style="left:1213px;top:499px" width="15" height="16" viewBox="0 0 15 16">
<path d="M4.9 0 H10.1 V2.2 H9 V1 H6 V2.2 H4.9 Z" fill="#1a9dfd"/>
<rect x="1" y="2" width="13" height="2.9" rx="0.7" fill="#1a9dfd"/>
<path d="M2 5.9 H13 V14.2 Q13 15.8 11.4 15.8 H3.6 Q2 15.8 2 14.2 Z" fill="#1a9dfd"/>
<rect x="3.9" y="6.7" width="2.2" height="7.2" fill="#a6d7ff"/>
<rect x="8.9" y="6.7" width="2.1" height="7.2" fill="#a6d7ff"/>
<rect x="6.9" y="7" width="1.2" height="6.9" fill="#fff"/>
</svg>
<svg class="a" style="left:1241px;top:499px" width="16" height="16" viewBox="0 0 16 16">
<path d="M12.2 0.8 Q13.4 -0.2 14.6 1 L15 1.4 Q16.2 2.6 15.2 3.8 L13.8 5.2 L10.8 2.2 Z" fill="#1a9dfd"/>
<path d="M10.1 2.7 L13.3 5.9 L4.5 14.7 L1.3 11.5 Z" fill="#1a9dfd"/>
<path d="M0.9 12.3 L3.7 15.1 L0 16 Z" fill="#1a9dfd"/>
</svg>
<svg class="a" style="left:280px;top:532px" width="16" height="16" viewBox="0 0 16 16"><circle cx="8" cy="8" r="8" fill="#13a44d"/><path d="M4.6 8.2 L7 10.5 L11.4 6" stroke="#fff" stroke-width="1.7" fill="none" stroke-linecap="round" stroke-linejoin="round"/></svg>
<div class="a td" style="left:311px;width:71px;text-align:center;top:532px">监测中</div>
<div class="a td lk" style="left:391px;top:532px">处理器</div>
<div class="a td gr" style="left:508px;top:532px">1个正常</div>
<div class="a td" style="left:1069px;width:94px;text-align:center;top:532px;letter-spacing:0.5px">07-11 18:05</div>
<div class="a chk" style="left:1288px;top:533px"></div>
<svg class="a" style="left:1213px;top:532px" width="15" height="16" viewBox="0 0 15 16">
<path d="M4.9 0 H10.1 V2.2 H9 V1 H6 V2.2 H4.9 Z" fill="#1a9dfd"/>
<rect x="1" y="2" width="13" height="2.9" rx="0.7" fill="#1a9dfd"/>
<path d="M2 5.9 H13 V14.2 Q13 15.8 11.4 15.8 H3.6 Q2 15.8 2 14.2 Z" fill="#1a9dfd"/>
<rect x="3.9" y="6.7" width="2.2" height="7.2" fill="#a6d7ff"/>
<rect x="8.9" y="6.7" width="2.1" height="7.2" fill="#a6d7ff"/>
<rect x="6.9" y="7" width="1.2" height="6.9" fill="#fff"/>
</svg>
<svg class="a" style="left:1241px;top:532px" width="16" height="16" viewBox="0 0 16 16">
<path d="M12.2 0.8 Q13.4 -0.2 14.6 1 L15 1.4 Q16.2 2.6 15.2 3.8 L13.8 5.2 L10.8 2.2 Z" fill="#1a9dfd"/>
<path d="M10.1 2.7 L13.3 5.9 L4.5 14.7 L1.3 11.5 Z" fill="#1a9dfd"/>
<path d="M0.9 12.3 L3.7 15.1 L0 16 Z" fill="#1a9dfd"/>
</svg>
<svg class="a" style="left:280px;top:565px" width="16" height="16" viewBox="0 0 16 16"><circle cx="8" cy="8" r="8" fill="#13a44d"/><path d="M4.6 8.2 L7 10.5 L11.4 6" stroke="#fff" stroke-width="1.7" fill="none" stroke-linecap="round" stroke-linejoin="round"/></svg>
<div class="a td" style="left:311px;width:71px;text-align:center;top:565px">监测中</div>
<div class="a td lk" style="left:391px;top:565px">内存</div>
<div class="a td gr" style="left:508px;top:565px">8个正常</div>
<div class="a td" style="left:1069px;width:94px;text-align:center;top:565px;letter-spacing:0.5px">07-11 18:05</div>
<div class="a chk" style="left:1288px;top:566px"></div>
<svg class="a" style="left:1213px;top:565px" width="15" height="16" viewBox="0 0 15 16">
<path d="M4.9 0 H10.1 V2.2 H9 V1 H6 V2.2 H4.9 Z" fill="#1a9dfd"/>
<rect x="1" y="2" width="13" height="2.9" rx="0.7" fill="#1a9dfd"/>
<path d="M2 5.9 H13 V14.2 Q13 15.8 11.4 15.8 H3.6 Q2 15.8 2 14.2 Z" fill="#1a9dfd"/>
<rect x="3.9" y="6.7" width="2.2" height="7.2" fill="#a6d7ff"/>
<rect x="8.9" y="6.7" width="2.1" height="7.2" fill="#a6d7ff"/>
<rect x="6.9" y="7" width="1.2" height="6.9" fill="#fff"/>
</svg>
<svg class="a" style="left:1241px;top:565px" width="16" height="16" viewBox="0 0 16 16">
<path d="M12.2 0.8 Q13.4 -0.2 14.6 1 L15 1.4 Q16.2 2.6 15.2 3.8 L13.8 5.2 L10.8 2.2 Z" fill="#1a9dfd"/>
<path d="M10.1 2.7 L13.3 5.9 L4.5 14.7 L1.3 11.5 Z" fill="#1a9dfd"/>
<path d="M0.9 12.3 L3.7 15.1 L0 16 Z" fill="#1a9dfd"/>
</svg>
<svg class="a" style="left:280px;top:598px" width="16" height="16" viewBox="0 0 16 16"><circle cx="8" cy="8" r="8" fill="#13a44d"/><path d="M4.6 8.2 L7 10.5 L11.4 6" stroke="#fff" stroke-width="1.7" fill="none" stroke-linecap="round" stroke-linejoin="round"/></svg>
<div class="a td" style="left:311px;width:71px;text-align:center;top:598px">监测中</div>
<div class="a td lk" style="left:391px;top:598px">阵列卡</div>
<div class="a td gr" style="left:508px;top:598px">1个正常</div>
<div class="a td" style="left:1069px;width:94px;text-align:center;top:598px;letter-spacing:0.5px">07-11 18:05</div>
<div class="a chk" style="left:1288px;top:599px"></div>
<svg class="a" style="left:1213px;top:598px" width="15" height="16" viewBox="0 0 15 16">
<path d="M4.9 0 H10.1 V2.2 H9 V1 H6 V2.2 H4.9 Z" fill="#1a9dfd"/>
<rect x="1" y="2" width="13" height="2.9" rx="0.7" fill="#1a9dfd"/>
<path d="M2 5.9 H13 V14.2 Q13 15.8 11.4 15.8 H3.6 Q2 15.8 2 14.2 Z" fill="#1a9dfd"/>
<rect x="3.9" y="6.7" width="2.2" height="7.2" fill="#a6d7ff"/>
<rect x="8.9" y="6.7" width="2.1" height="7.2" fill="#a6d7ff"/>
<rect x="6.9" y="7" width="1.2" height="6.9" fill="#fff"/>
</svg>
<svg class="a" style="left:1241px;top:598px" width="16" height="16" viewBox="0 0 16 16">
<path d="M12.2 0.8 Q13.4 -0.2 14.6 1 L15 1.4 Q16.2 2.6 15.2 3.8 L13.8 5.2 L10.8 2.2 Z" fill="#1a9dfd"/>
<path d="M10.1 2.7 L13.3 5.9 L4.5 14.7 L1.3 11.5 Z" fill="#1a9dfd"/>
<path d="M0.9 12.3 L3.7 15.1 L0 16 Z" fill="#1a9dfd"/>
</svg>
<svg class="a" style="left:280px;top:631px" width="16" height="16" viewBox="0 0 16 16"><circle cx="8" cy="8" r="8" fill="#13a44d"/><path d="M4.6 8.2 L7 10.5 L11.4 6" stroke="#fff" stroke-width="1.7" fill="none" stroke-linecap="round" stroke-linejoin="round"/></svg>
<svg class="a" style="left:1213px;top:631px" width="15" height="16" viewBox="0 0 15 16">
<path d="M4.9 0 H10.1 V2.2 H9 V1 H6 V2.2 H4.9 Z" fill="#1a9dfd"/>
<rect x="1" y="2" width="13" height="2.9" rx="0.7" fill="#1a9dfd"/>
<path d="M2 5.9 H13 V14.2 Q13 15.8 11.4 15.8 H3.6 Q2 15.8 2 14.2 Z" fill="#1a9dfd"/>
<rect x="3.9" y="6.7" width="2.2" height="7.2" fill="#a6d7ff"/>
<rect x="8.9" y="6.7" width="2.1" height="7.2" fill="#a6d7ff"/>
<rect x="6.9" y="7" width="1.2" height="6.9" fill="#fff"/>
</svg>
<svg class="a" style="left:1241px;top:631px" width="16" height="16" viewBox="0 0 16 16">
<path d="M12.2 0.8 Q13.4 -0.2 14.6 1 L15 1.4 Q16.2 2.6 15.2 3.8 L13.8 5.2 L10.8 2.2 Z" fill="#1a9dfd"/>
<path d="M10.1 2.7 L13.3 5.9 L4.5 14.7 L1.3 11.5 Z" fill="#1a9dfd"/>
<path d="M0.9 12.3 L3.7 15.1 L0 16 Z" fill="#1a9dfd"/>
</svg>
<div class="a" style="left:0;top:632px;width:1305px;height:22px;background:#2a2f3b"></div>
<div class="a" style="left:0;top:654px;width:1305px;height:1px;background:#17191b"></div>
<div class="a" style="left:0;top:655px;width:1305px;height:1px;background:#b9bdb0"></div>
<div class="a" style="left:318px;top:655px;width:552px;height:1px;background:#f4f4f4"></div>
<div class="a" style="left:559px;top:636px;font-size:12px;line-height:16px;color:#fff;-webkit-text-stroke:0.2px #fff">版权所有</div>
<div class="a" style="left:611.5px;top:636px;font-size:12px;line-height:16px;color:#fff;letter-spacing:0.75px">© 2012-2020</div>
<div class="a" style="left:695.5px;top:636px;font-size:12px;line-height:16px;color:#fff;-webkit-text-stroke:0.2px #fff">安超云软件有限公司</div>
</body></html>
